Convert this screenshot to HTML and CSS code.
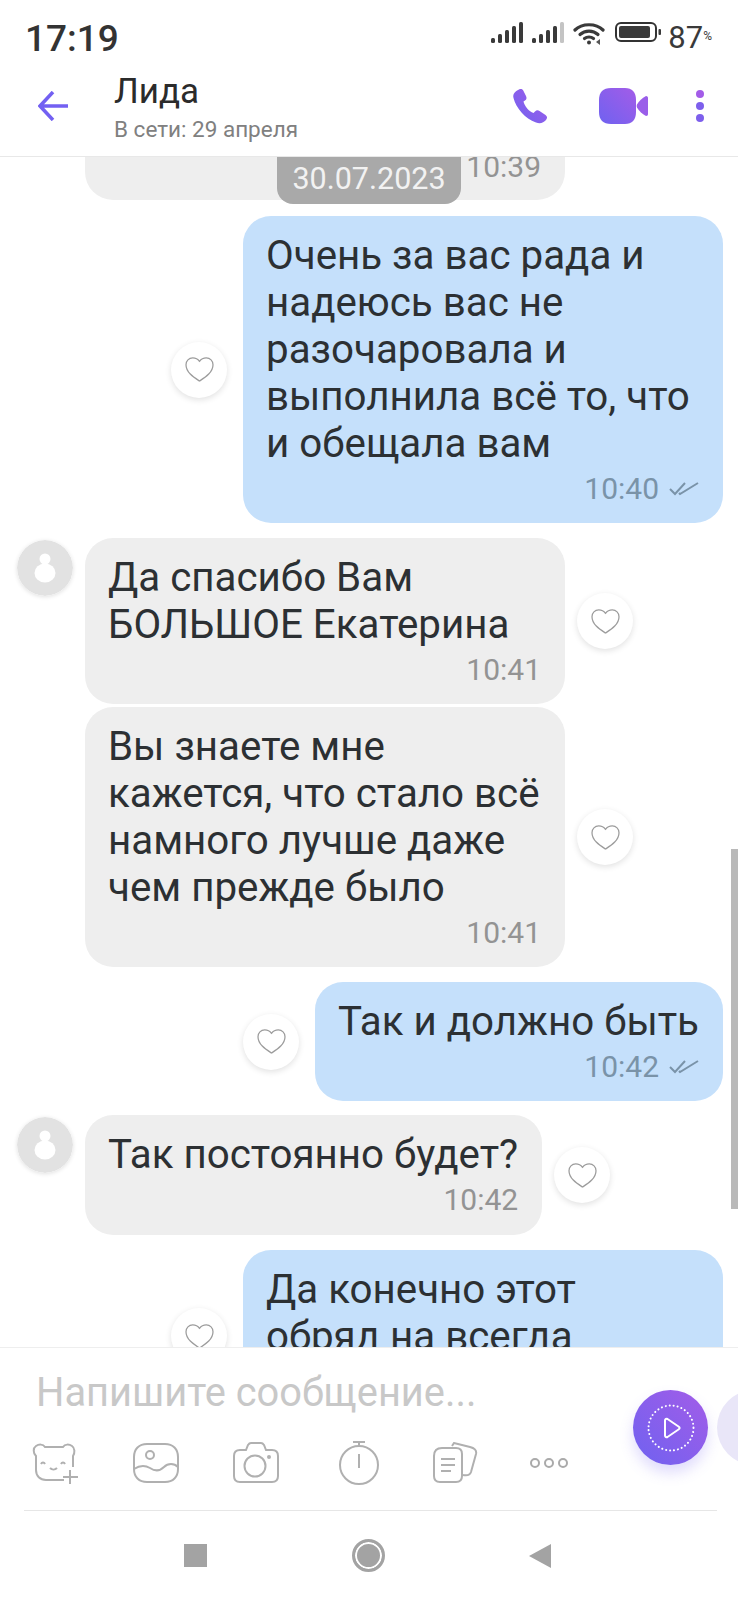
FILE: index.html
```html
<!DOCTYPE html>
<html>
<head>
<meta charset="utf-8">
<meta name="viewport" content="width=device-width, initial-scale=1.0">
<title>Лида</title>
<link rel="stylesheet" href="styles.css">
</head>
<body>
<svg class="defs" width="0" height="0">
    <defs>
        <linearGradient id="violet" x1="0" y1="1" x2="1" y2="0">
            <stop offset="0" stop-color="#6f62f0"/>
            <stop offset="1" stop-color="#a35ce8"/>
        </linearGradient>
        <symbol id="heart" viewBox="0 0 32 28">
            <path d="M16 26C10 22 2 17 2 9C2 5 5 2 9 2C12 2 14.500 3.500 16 5.500C17.500 3.500 20 2 23 2C27 2 30 5 30 9C30 17 22 22 16 26Z" fill="none" stroke="#9c9c9c" stroke-width="1.300"/>
        </symbol>
        <symbol id="person" viewBox="0 0 56 56">
            <circle cx="28" cy="28" r="28" fill="#e2e2e2"/>
            <circle cx="28" cy="19" r="5.500" fill="#fff"/>
            <ellipse cx="28" cy="33" rx="10.500" ry="9.500" fill="#fff"/>
        </symbol>
        <symbol id="ticks" viewBox="0 0 30 14">
            <path d="M1 7L6 12L16 1M10 11L11 12L29 1" fill="none" stroke="#7a93a8" stroke-width="2"/>
        </symbol>
    </defs>
</svg>

<div class="phone">
    <div class="status-bar">
        <span class="clock">17:19</span>
        <div class="status-icons">
            <svg width="32" height="22" viewBox="0 0 32 22" fill="#3a3a3a">
                <rect x="0" y="16" width="4" height="5" rx="1.500"/>
                <rect x="7" y="12" width="4" height="9" rx="1.500"/>
                <rect x="14" y="8" width="4" height="13" rx="1.500"/>
                <rect x="21" y="4" width="4" height="17" rx="1.500"/>
                <rect x="28" y="0" width="4" height="21" rx="1.500"/>
            </svg>
            <svg width="32" height="22" viewBox="0 0 32 22" fill="#3a3a3a">
                <rect x="0" y="16" width="4" height="5" rx="1.500"/>
                <rect x="7" y="12" width="4" height="9" rx="1.500"/>
                <rect x="14" y="8" width="4" height="13" rx="1.500"/>
                <rect x="21" y="4" width="4" height="17" rx="1.500"/>
                <rect x="28" y="0" width="4" height="21" rx="1.500" fill="#c4c4c4"/>
            </svg>
            <svg class="wifi" width="32" height="24" viewBox="0 0 32 24" fill="none" stroke="#3a3a3a" stroke-width="3.200" stroke-linecap="round">
                <path d="M2 8C9 1 23 1 30 8"/>
                <path d="M7 12.500C12 8 20 8 25 12.500"/>
                <path d="M11.500 16.500C14 14.500 18 14.500 20.500 16.500"/>
                <circle cx="16" cy="20.500" r="2" fill="#3a3a3a" stroke="none"/>
                <path d="M23 20L27 17V23Z" fill="#555" stroke="none"/>
            </svg>
            <svg class="battery" width="46" height="20" viewBox="0 0 46 20">
                <rect x="1" y="1" width="40" height="18" rx="5" fill="none" stroke="#333" stroke-width="2"/>
                <rect x="4" y="4" width="31" height="12" rx="2" fill="#3a3a3a"/>
                <rect x="43.500" y="7" width="2.500" height="6" rx="1" fill="#3a3a3a"/>
            </svg>
            <span class="percent">87<small>%</small></span>
        </div>
    </div>

    <header class="chat-header">
        <svg class="back" width="30" height="30" viewBox="0 0 30 30" fill="none" stroke="#7360f2" stroke-width="3.500">
            <path d="M15 1L2 15L15 29M2 15H30"/>
        </svg>
        <div class="contact">
            <div class="contact-name">Лида</div>
            <div class="contact-seen">В сети: 29 апреля</div>
        </div>
        <svg class="call" width="36" height="36" viewBox="0 0 36 36">
            <path d="M7 1.500C9 .500 10.500 1 11.500 3L14 8C15 10 14.500 11.500 13 12.500L11.500 13.500C12.500 18 17 23.500 21.500 25L23 23.500C24.500 22 26 22 27.500 23L33.500 27C35.500 28.500 35.500 30 34 32C31.500 35 28 36 24 34.500C13 30.500 4 20 1.500 10C.500 6 3 3.500 7 1.500Z" fill="url(#violet)"/>
        </svg>
        <svg class="video" width="49" height="36" viewBox="0 0 49 36">
            <path d="M12 0H26C33 0 37 4 37 12V24C37 32 33 36 26 36H12C4 36 0 32 0 24V12C0 4 4 0 12 0Z" fill="url(#violet)"/>
            <path d="M47 8C48.500 8 49 9 49 10V26C49 27 48.500 28 47 28C43 26 40 23 38 19.500C37.500 18.500 37.500 17.500 38 16.500C40 13 43 10 47 8Z" fill="#9a5ee9"/>
        </svg>
        <div class="more-dots"><i></i><i></i><i></i></div>
    </header>

    <main class="messages">
        <div class="row in first">
            <div class="avatar-gap"></div>
            <div class="bubble clipped"><div class="time">10:39</div></div>
        </div>

        <div class="row out">
            <div class="like"><svg><use href="#heart"/></svg></div>
            <div class="bubble">
                Очень за вас рада и надеюсь вас не разочаровала и выполнила всё то, что и обещала вам
                <div class="time">10:40 <svg class="tick-icon"><use href="#ticks"/></svg></div>
            </div>
        </div>

        <div class="row in">
            <svg class="avatar"><use href="#person"/></svg>
            <div class="bubble">
                Да спасибо Вам БОЛЬШОЕ Екатерина
                <div class="time">10:41</div>
            </div>
            <div class="like"><svg><use href="#heart"/></svg></div>
        </div>

        <div class="row in next">
            <div class="avatar-gap"></div>
            <div class="bubble">
                Вы знаете мне кажется, что стало всё намного лучше даже чем прежде было
                <div class="time">10:41</div>
            </div>
            <div class="like"><svg><use href="#heart"/></svg></div>
        </div>

        <div class="row out">
            <div class="like"><svg><use href="#heart"/></svg></div>
            <div class="bubble">
                Так и должно быть
                <div class="time">10:42 <svg class="tick-icon"><use href="#ticks"/></svg></div>
            </div>
        </div>

        <div class="row in single">
            <svg class="avatar"><use href="#person"/></svg>
            <div class="bubble">
                Так постоянно будет?
                <div class="time">10:42</div>
            </div>
            <div class="like"><svg><use href="#heart"/></svg></div>
        </div>

        <div class="row out">
            <div class="like"><svg><use href="#heart"/></svg></div>
            <div class="bubble tail-cut">Да конечно этот<br>обряд на всегда</div>
        </div>

        <div class="date-pill">30.07.2023</div>
        <div class="scroll-thumb"></div>
    </main>

    <footer class="composer">
        <div class="composer-top">
            <div class="composer-left">
                <div class="placeholder">Напишите сообщение...</div>
                <div class="tools">
                    <svg width="48" height="42" viewBox="0 0 48 42">
                        <path d="M32 38H14C8 38 4 34 4 28V14C1 11 1 6 4 4C7 2 11 2 13 5H31C33 2 37 2 40 4C43 6 43 11 41 14V25"/>
                        <path d="M9 22C10 20 12 20 13 22M29 22C30 20 32 20 33 22M18 26C20 28 23 28 25 26M38 28V42M31 35H46"/>
                    </svg>
                    <svg width="48" height="42" viewBox="0 0 48 42">
                        <path d="M15 2H33C41 2 46 7 46 15V27C46 35 41 40 33 40H15C7 40 2 35 2 27V15C2 7 7 2 15 2Z"/>
                        <circle cx="18" cy="13" r="4"/>
                        <path d="M2 27C8 23 13 23 18 26C24 30 28 29 32 25C36 21 42 21 46 25"/>
                    </svg>
                    <svg width="48" height="42" viewBox="0 0 48 42">
                        <path d="M14 8L16 3C17 1.500 18 1 19 1H29C30 1 31 1.500 32 3L34 8H40C44 8 46 10 46 14V34C46 38 44 40 40 40H8C4 40 2 38 2 34V14C2 10 4 8 8 8Z"/>
                        <circle cx="23" cy="24" r="10.500"/>
                        <circle cx="37" cy="15" r="1" fill="#aaa"/>
                    </svg>
                    <svg class="timer" width="48" height="46" viewBox="0 0 48 46">
                        <circle cx="24" cy="25" r="19"/>
                        <path d="M24 14V28M18 2H30M24 2V6"/>
                    </svg>
                    <svg width="48" height="42" viewBox="0 0 48 42">
                        <path d="M10 6H24C28 6 30 8 30 12V34C30 38 28 40 24 40H8C4 40 2 38 2 34V14C2 9 5 6 10 6Z"/>
                        <path d="M9 17H23M9 23H23M9 29H19"/>
                        <path d="M20 4L22 1L38 5C42 6 45 8 44 12L39 30C38 33 36 34 31 33"/>
                    </svg>
                    <div class="more-tools"><i></i><i></i><i></i></div>
                </div>
            </div>
            <div class="record">
                <svg width="48" height="48" viewBox="0 0 48 48" fill="none" stroke="#fff">
                    <circle cx="24" cy="24" r="22.500" stroke-width="2" stroke-dasharray="0.100 3.900" stroke-linecap="round"/>
                    <path d="M18 16.500C18 15 19.500 14.500 20.500 15L31.500 22.500C33 23.500 33 24.500 31.500 25.500L20.500 33C19.500 33.500 18 33 18 31.500Z" stroke-width="2"/>
                </svg>
            </div>
            <div class="send-next"></div>
        </div>
        <div class="divider"></div>
        <div class="nav-keys">
            <span class="key-square"></span>
            <span class="key-home"></span>
            <span class="key-back"></span>
        </div>
    </footer>
</div>
</body>
</html>
```

FILE: styles.css
```css
* {
    box-sizing: border-box;
}
body {
    margin: 0;
    padding: 0;
    background: #fff;
    font-family: Roboto, "Noto Sans", sans-serif;
    color: #2c3033;
}
.defs {
    position: absolute;
}
.phone {
    width: 738px;
    height: 1599px;
    display: flex;
    flex-direction: column;
    overflow: hidden;
}

/* status bar */
.status-bar {
    height: 73px;
    flex: none;
    display: flex;
    justify-content: space-between;
    padding: 18px 26px 0 25px;
}
.clock {
    font-size: 37px;
    font-weight: 500;
    line-height: 42px;
    color: #333;
}
.status-icons {
    display: flex;
    align-items: flex-start;
    padding-top: 4px;
}
.status-icons svg {
    margin-right: 9px;
}
.status-icons .wifi {
    margin-right: 10px;
}
.status-icons .battery {
    margin-right: 7px;
}
.percent {
    font-size: 31px;
    line-height: 36px;
    color: #3a3a3a;
    margin-top: -4px;
}
.percent small {
    font-size: 12px;
    vertical-align: 8px;
}

/* chat header */
.chat-header {
    height: 84px;
    flex: none;
    display: flex;
    align-items: center;
    padding: 0 34px 18px 38px;
    border-bottom: 1px solid #e8e8e8;
}
.back {
    flex: none;
}
.contact {
    flex: 1;
    margin-left: 46px;
    padding-top: 4px;
}
.contact-name {
    font-size: 35px;
    line-height: 40px;
    color: #2b2b2b;
}
.contact-seen {
    font-size: 22.500px;
    line-height: 28px;
    margin-top: 3px;
    color: #808080;
}
.call {
    margin-right: 51px;
}
.video {
    margin-right: 48px;
}
.more-dots {
    display: flex;
    flex-direction: column;
    gap: 4px;
}
.more-dots i {
    display: block;
    width: 8px;
    height: 8px;
    border-radius: 50%;
    background: #7d5fec;
}
.more-dots i:first-child {
    background: #a35ce8;
}

/* messages */
.messages {
    flex: 1;
    min-height: 0;
    position: relative;
    overflow: hidden;
}
.row {
    display: flex;
    align-items: center;
    margin-top: 15px;
}
.row.first {
    margin-top: 0;
}
.row.first + .row {
    margin-top: 16px;
}
.row.next {
    margin-top: 3px;
}
.row.single {
    margin-top: 14px;
}
.row.single .bubble {
    min-height: 120px;
}
.row.in {
    padding-left: 17px;
}
.row.out {
    justify-content: flex-end;
    padding-right: 15px;
}
.bubble {
    max-width: 480px;
    padding: 16px 24px 16px 23px;
    border-radius: 28px;
    font-size: 40.300px;
    line-height: 47px;
}
.row.in .bubble {
    background: #eeeeee;
}
.row.out .bubble {
    background: #c5e0fb;
}
.row.in.first .bubble {
    width: 480px;
    height: 43px;
    min-height: 0;
    padding-top: 0;
    padding-bottom: 0;
    border-radius: 0 0 28px 28px;
}
.row.in.first .time {
    margin-top: -8px;
}
.bubble.tail-cut {
    width: 480px;
    min-height: 172px;
}
.time {
    display: flex;
    justify-content: flex-end;
    align-items: center;
    gap: 10px;
    margin-top: 4px;
    font-size: 30px;
    line-height: 36px;
    color: #939393;
}
.row.out .time {
    color: #7a93a8;
}
.tick-icon {
    width: 30px;
    height: 14px;
}
.avatar {
    flex: none;
    width: 56px;
    height: 56px;
    margin-right: 12px;
    align-self: flex-start;
    margin-top: 2px;
    border-radius: 50%;
    box-shadow: 0 1px 4px rgba(0, 0, 0, 0.12);
}
.avatar-gap {
    flex: none;
    width: 68px;
}
.like {
    flex: none;
    width: 56px;
    height: 56px;
    display: flex;
    align-items: center;
    justify-content: center;
    border-radius: 50%;
    background: #fff;
    box-shadow: 0 2px 6px rgba(0, 0, 0, 0.12);
}
.like svg {
    width: 31px;
    height: 27px;
}
.row.in .like {
    margin-left: 12px;
}
.row.out .like {
    margin-right: 16px;
}
.date-pill {
    position: absolute;
    top: 0;
    left: 277px;
    width: 184px;
    height: 47px;
    border-radius: 0 0 16px 16px;
    background: #a9a9a9;
    color: #f2f2f2;
    font-size: 30.500px;
    line-height: 44px;
    text-align: center;
}
.scroll-thumb {
    position: absolute;
    top: 692px;
    right: 0;
    width: 7px;
    height: 360px;
    background: #b9b9b9;
}

/* composer */
.composer {
    height: 252px;
    flex: none;
    border-top: 1px solid #eeeeee;
    background: #fff;
    overflow: hidden;
}
.composer-top {
    height: 162px;
    display: flex;
    align-items: flex-start;
}
.composer-left {
    width: 633px;
    padding-left: 32px;
}
.placeholder {
    font-size: 39.800px;
    line-height: 46px;
    color: #c8c8c8;
    margin-top: 22px;
    padding-left: 4px;
}
.tools {
    display: flex;
    align-items: center;
    gap: 52px;
    margin-top: 24px;
}
.tools svg {
    fill: none;
    stroke: #b0b0b0;
    stroke-width: 2;
    flex: none;
}
.tools .timer {
    margin: 0 -3px 0 3px;
}
.more-tools {
    display: flex;
    gap: 4px;
    margin-left: -2px;
}
.more-tools i {
    display: block;
    width: 10px;
    height: 10px;
    border: 2px solid #aaaaaa;
    border-radius: 50%;
}
.record {
    flex: none;
    width: 75px;
    height: 75px;
    margin-top: 42px;
    display: flex;
    align-items: center;
    justify-content: center;
    border-radius: 50%;
    background: linear-gradient(45deg, #6f62f0, #a35ce8);
    box-shadow: 0 8px 14px rgba(115, 96, 242, 0.22);
}
.send-next {
    flex: none;
    width: 75px;
    height: 75px;
    margin: 42px -54px 0 9px;
    border-radius: 50%;
    background: #e9e6f8;
}
.divider {
    height: 1px;
    margin: 0 21px 0 24px;
    background: #e6e6e6;
}
.nav-keys {
    height: 89px;
    position: relative;
    display: flex;
    align-items: center;
    padding-left: 184px;
}
.key-square {
    width: 23px;
    height: 23px;
    background: #a3a3a3;
    margin-right: 145px;
}
.key-home {
    width: 33px;
    height: 33px;
    border: 3px solid #a3a3a3;
    border-radius: 50%;
    background: #a3a3a3;
    box-shadow: inset 0 0 0 2px #fff;
    margin-right: 144px;
}
.key-back {
    width: 0;
    height: 0;
    border-top: 12px solid transparent;
    border-bottom: 12px solid transparent;
    border-right: 22px solid #a3a3a3;
}
```
